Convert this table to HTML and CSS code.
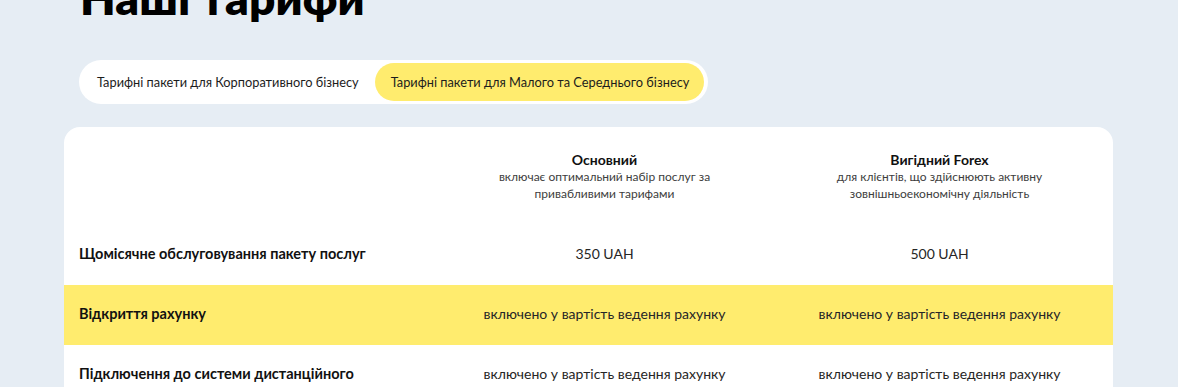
FILE: index.html
```html
<!DOCTYPE html>
<html lang="uk">
<head>
<meta charset="utf-8">
<title>Наші тарифи</title>
<link rel="stylesheet" href="styles.css">
</head>
<body>
<main class="page">
  <h1 class="title">Наші тарифи</h1>
  <div class="tabs">
    <button class="tab">Тарифні пакети для Корпоративного бізнесу</button>
    <button class="tab tab--active">Тарифні пакети для Малого та Середнього бізнесу</button>
  </div>
  <section class="card">
    <div class="row row--head">
      <div class="cell cell--label"></div>
      <div class="cell">
        <div class="plan">Основний</div>
        <div class="plan-desc">включає оптимальний набір послуг за<br>привабливими тарифами</div>
      </div>
      <div class="cell">
        <div class="plan">Вигідний Forex</div>
        <div class="plan-desc">для клієнтів, що здійснюють активну<br>зовнішньоекономічну діяльність</div>
      </div>
    </div>
    <div class="row">
      <div class="cell cell--label">Щомісячне обслуговування пакету послуг</div>
      <div class="cell">350 UAH</div>
      <div class="cell">500 UAH</div>
    </div>
    <div class="row row--hl">
      <div class="cell cell--label">Відкриття рахунку</div>
      <div class="cell">включено у вартість ведення рахунку</div>
      <div class="cell">включено у вартість ведення рахунку</div>
    </div>
    <div class="row">
      <div class="cell cell--label">Підключення до системи дистанційного</div>
      <div class="cell">включено у вартість ведення рахунку</div>
      <div class="cell">включено у вартість ведення рахунку</div>
    </div>
  </section>
</main>
</body>
</html>
```
FILE: styles.css
```css
* { box-sizing: border-box; }
html, body { margin: 0; padding: 0; }
body {
  background: #e6edf4;
  font-family: "Lato", "Noto Sans", sans-serif;
  color: #1c1c1c;
  overflow: hidden;
}
.page {
  width: 1049px;
  margin-left: 64px;
}
.title {
  margin: -30px 0 0 16px;
  font-size: 46px;
  line-height: 56px;
  font-weight: 800;
  color: #000;
  letter-spacing: 0.1px;
}
.tabs {
  display: inline-flex;
  align-items: center;
  margin: 34px 0 0 15px;
  padding: 3px 4px 3px 3px;
  background: #fff;
  border-radius: 22px;
  height: 44px;
}
.tab {
  border: 0;
  background: transparent;
  font-family: inherit;
  font-size: 12.8px;
  color: #1c1c1c;
  padding: 0 16px 0 15px;
  height: 38px;
  border-radius: 19px;
  cursor: pointer;
}
.tab--active {
  background: #ffec6e;
  padding: 0 15px 0 16px;
}
.card {
  margin-top: 23px;
  background: #fff;
  border-radius: 16px 16px 0 0;
  overflow: hidden;
  padding-bottom: 20px;
}
.row {
  display: grid;
  grid-template-columns: 373px 335px 335px;
  align-items: center;
  height: 60px;
  padding-bottom: 3px;
}
.row--head {
  height: auto;
  padding: 24px 0 23px;
  align-items: start;
}
.row--hl { background: #ffec6e; }
.cell {
  text-align: center;
  font-size: 14px;
  color: #262626;
}
.cell--label {
  text-align: left;
  padding-left: 15px;
  font-weight: 700;
  font-size: 14.5px;
  color: #111;
}
.plan {
  font-weight: 700;
  font-size: 14px;
  line-height: 17px;
  color: #111;
}
.plan-desc {
  font-size: 12px;
  line-height: 17px;
  color: #3d3d3d;
}
```
